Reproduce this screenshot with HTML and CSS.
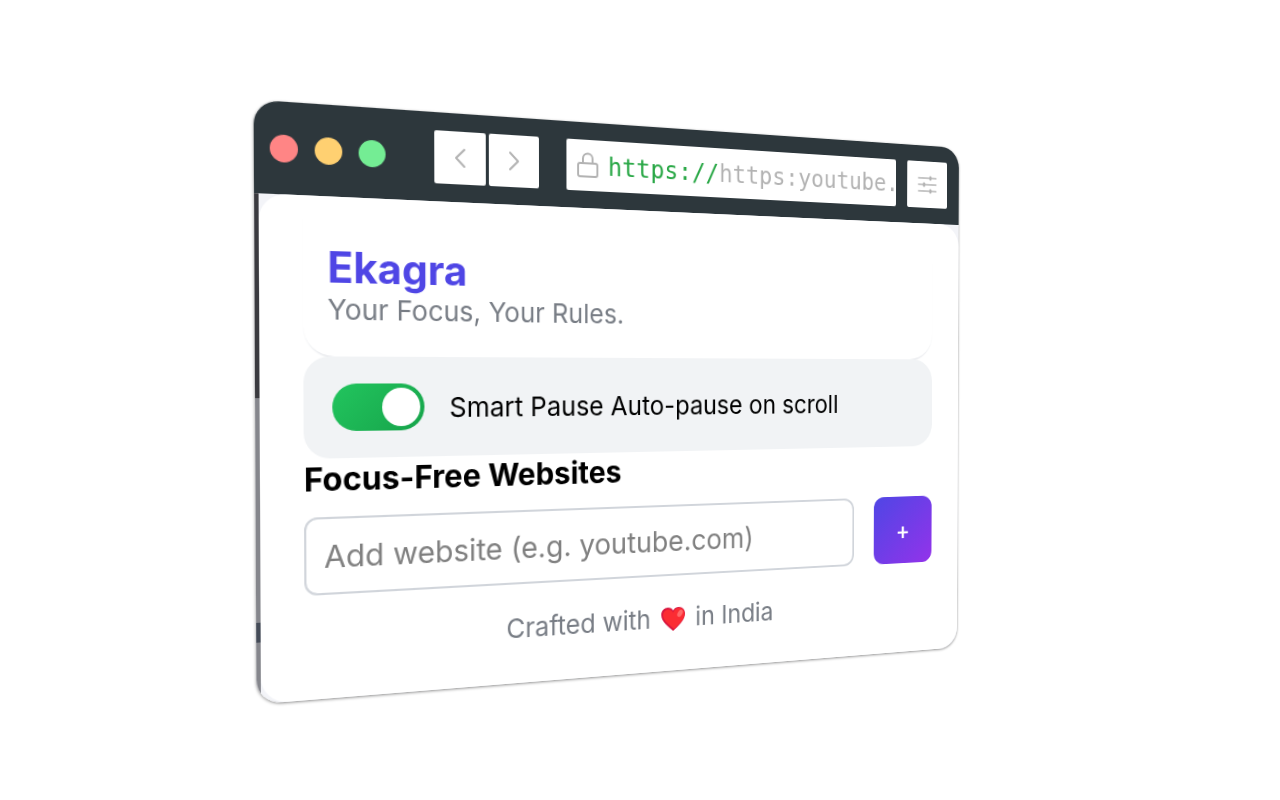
FILE: index.html
```html
<!DOCTYPE html>
<html lang="en">
<head>
  <meta charset="UTF-8">
  <meta name="viewport" content="width=device-width, initial-scale=1">
  <title>Ekagra</title>
  <link rel="stylesheet" href="styles.css">
</head>
<body>
  <main class="browser">
    <!-- Browser toolbar -->
    <header class="toolbar">
      <div class="lights">
        <span class="light red"></span>
        <span class="light yellow"></span>
        <span class="light green"></span>
      </div>
      <nav class="nav">
        <button class="tool-btn" aria-label="Back">
          <svg width="24" height="24" viewBox="0 0 24 24"><path d="M16 4 8 12l8 8"/></svg>
        </button>
        <button class="tool-btn" aria-label="Forward">
          <svg width="24" height="24" viewBox="0 0 24 24"><path d="m8 4 8 8-8 8"/></svg>
        </button>
      </nav>
      <div class="address">
        <svg class="lock" width="24" height="28" viewBox="0 0 24 28"><rect x="2" y="12" width="20" height="13" rx="2"/><path d="M7 12V7.500a5 5 0 0 1 10 0V12"/></svg>
        <span class="url"><span class="scheme">https://</span>https:youtube.</span>
      </div>
      <button class="tool-btn" aria-label="Settings">
        <svg class="sliders" width="24" height="24" viewBox="0 0 24 24"><path d="M1 5h22M1 12h22M1 19h22"/><path class="knobs" d="M16 4v2M8 11v2M16 18v2"/></svg>
      </button>
    </header>

    <!-- Extension popup -->
    <div class="page">
      <div class="strip"></div>
      <div class="popup">
        <div class="brand">
          <h1>Ekagra</h1>
          <p>Your Focus, Your Rules.</p>
        </div>
        <label class="toggle-row">
          <input type="checkbox" class="switch" checked>
          <span>Smart Pause Auto-pause on scroll</span>
        </label>
        <h2>Focus-Free Websites</h2>
        <form class="add-row">
          <input type="text" class="site" aria-label="Website" placeholder="Add website (e.g. youtube.com)">
          <button type="button" class="add" aria-label="Add website">+</button>
        </form>
        <p class="footer">
          Crafted with
          <svg class="heart" width="26" height="24" viewBox="0 0 26 24" role="img" aria-label="love">
            <path fill="#d9163f" d="M13 24C8 19.500 0 14 0 7 0 3 3 0 7 0c2.500 0 4.700 1.200 6 3.200C14.300 1.200 16.500 0 19 0c4 0 7 3 7 7 0 7-8 12.500-13 17z"/>
            <path fill="#fb2c33" d="M14 22C9 18 2 13 2 7.500 2 4 4.500 2 7.500 2 10 2 12 3.500 13 5.500 14 3 16 1 19 1c3.800 0 6.500 2.700 6.500 6.500C25.500 13 19 18 14 22z"/>
            <ellipse cx="20.500" cy="6.500" rx="2.500" ry="4" transform="rotate(35 20.500 6.500)" fill="#ff6a6a"/>
          </svg>
          in India
        </p>
      </div>
    </div>
  </main>
</body>
</html>
```

FILE: styles.css
```css
* {
  box-sizing: border-box;
  margin: 0;
  padding: 0;
}
body {
  min-height: 100vh;
  display: flex;
  align-items: center;
  justify-content: center;
  font-family: Inter, sans-serif;
  background: #fff;
  overflow: hidden;
}

/* Tilted browser window */
.browser {
  width: 100%;
  max-width: 746px;
  border-radius: 22px;
  overflow: hidden;
  background: #fff;
  box-shadow: 0 1px 3px rgba(0, 0, 0, 0.45);
  transform: perspective(1400px) rotateX(-1deg) rotateY(21deg);
}

/* Toolbar */
.toolbar {
  display: flex;
  align-items: center;
  gap: 14px;
  padding: 17px 15px 17px 14px;
  background: #2d373c;
}
.lights {
  display: flex;
  gap: 15px;
  margin-right: 32px;
}
.light {
  width: 25px;
  height: 25px;
  border-radius: 50%;
}
.red {
  background: #ff8585;
}
.yellow {
  background: #ffd071;
}
.green {
  background: #74ed94;
}
.nav {
  display: flex;
  gap: 3px;
  margin-right: 14px;
}
.tool-btn {
  display: grid;
  place-items: center;
  width: 50px;
  height: 50px;
  border: none;
  border-radius: 2px;
  background: #fff;
}
.toolbar svg {
  flex: none;
  fill: none;
  stroke: #b3b3b3;
  stroke-width: 2;
  stroke-linecap: round;
  stroke-linejoin: round;
}
.toolbar .sliders {
  stroke-width: 1.500;
}
.sliders .knobs {
  stroke-width: 3;
}
.address {
  flex: 1;
  min-width: 0;
  height: 50px;
  display: flex;
  align-items: center;
  gap: 9px;
  padding-left: 10px;
  border-radius: 2px;
  background: #fff;
}
.url {
  font-family: "DejaVu Sans Mono", monospace;
  font-size: 25px;
  color: #b3b3b3;
  white-space: nowrap;
}
.scheme {
  color: #28a745;
}

/* Page */
.page {
  display: flex;
  background: #f3f4f8;
}
.strip {
  width: 4px;
  background: linear-gradient(#3a3a3f 40%, #85868c 40%, #85868c 84%, #444b57 84%, #444b57 88%, #85868c 88%);
}
.popup {
  flex: 1;
  padding: 18px 33px 38px 39px;
  border-radius: 24px;
  background: #fff;
}
.brand {
  padding: 24px 22px 27px;
  border-radius: 0 0 28px 28px;
  box-shadow: 0 2px 2px -1px #dfe1e6;
}
h1 {
  font-size: 39px;
  line-height: 46px;
  color: #4f46e5;
}
.brand p {
  font-size: 26px;
  line-height: 32px;
  color: #787d85;
}
.toggle-row {
  display: flex;
  align-items: center;
  gap: 24px;
  height: 94px;
  padding: 0 26px;
  border-radius: 24px;
  background: #f1f3f5;
  font-size: 26px;
}
.switch {
  appearance: none;
  display: flex;
  justify-content: flex-end;
  width: 86px;
  height: 44px;
  padding: 4px;
  border-radius: 22px;
  background: linear-gradient(135deg, #22c55e, #16a34a);
}
.switch::before {
  content: "";
  width: 36px;
  border-radius: 50%;
  background: #fff;
}
h2 {
  font-size: 30px;
  line-height: 38px;
}
.add-row {
  display: flex;
  gap: 24px;
  padding-top: 16px;
}
.site {
  flex: 1;
  min-width: 0;
  height: 72px;
  padding: 0 16px;
  border: 2px solid #d1d5db;
  border-radius: 12px;
  font: 29px Inter, sans-serif;
}
.site::placeholder {
  color: #808080;
}
.add {
  width: 72px;
  height: 72px;
  border: none;
  border-radius: 12px;
  background: linear-gradient(135deg, #4f46e5, #9333ea);
  color: #fff;
  font: 500 26px Inter, sans-serif;
}
.footer {
  padding-top: 28px;
  text-align: center;
  font-size: 26px;
  line-height: 30px;
  color: #787d85;
}
.heart {
  margin: 0 4px;
  vertical-align: -4px;
}
```
